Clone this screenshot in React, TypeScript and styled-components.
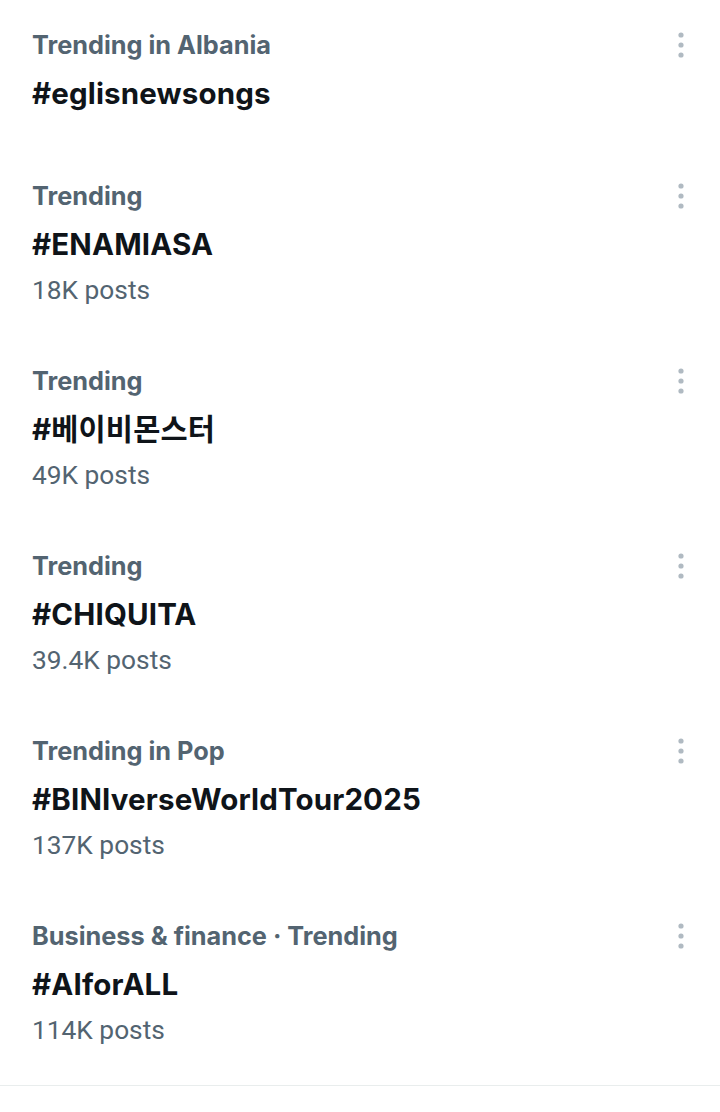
import React from 'react';
import styled, { createGlobalStyle } from 'styled-components';

type Trend = {
  category: string;
  tag: string;
  posts?: string;
};

const trends: Trend[] = [
  { category: 'Trending in Albania', tag: '#eglisnewsongs' },
  { category: 'Trending', tag: '#ENAMIASA', posts: '18K posts' },
  { category: 'Trending', tag: '#베이비몬스터', posts: '49K posts' },
  { category: 'Trending', tag: '#CHIQUITA', posts: '39.4K posts' },
  { category: 'Trending in Pop', tag: '#BINIverseWorldTour2025', posts: '137K posts' },
  { category: 'Business & finance · Trending', tag: '#AIforALL', posts: '114K posts' },
];

const GlobalStyle = createGlobalStyle`
  html, body {
    margin: 0;
    padding: 0;
    background: #ffffff;
  }
  body {
    font-family: Roboto, "Noto Sans CJK KR", sans-serif;
    -webkit-font-smoothing: antialiased;
  }
`;

const List = styled.div`
  display: flex;
  flex-direction: column;
  width: 720px;
  border-bottom: 1px solid #e9eded;
  padding-bottom: 9px;
`;

const Item = styled.div`
  display: flex;
  align-items: flex-start;
  justify-content: space-between;
  padding: 26px 24px 29px 32px;
`;

const Texts = styled.div`
  display: flex;
  flex-direction: column;
`;

const Category = styled.div`
  font-family: Inter, "Noto Sans CJK KR", sans-serif;
  font-size: 25.3px;
  font-weight: 700;
  line-height: 38px;
  color: #536471;
`;

const Tag = styled.div`
  font-family: Inter, "Noto Sans CJK KR", sans-serif;
  font-size: 29.5px;
  font-weight: 700;
  letter-spacing: 0.15px;
  line-height: 58px;
  color: #0f1419;
`;

const Posts = styled.div`
  font-size: 26.3px;
  font-weight: 400;
  line-height: 34px;
  color: #536471;
`;

const MoreButton = styled.button`
  display: flex;
  align-items: center;
  justify-content: center;
  width: 30px;
  height: 38px;
  padding: 0;
  border: none;
  background: none;
  cursor: pointer;
`;

const MoreIcon = () => (
  <svg width="6" height="26" viewBox="0 0 6 26">
    <circle cx="3" cy="3" r="2.6" fill="#b0bac2" />
    <circle cx="3" cy="13" r="2.6" fill="#b0bac2" />
    <circle cx="3" cy="23" r="2.6" fill="#b0bac2" />
  </svg>
);

export default function App() {
  return (
    <>
      <GlobalStyle />
      <List>
        {trends.map((t) => (
          <Item key={t.tag}>
            <Texts>
              <Category>{t.category}</Category>
              <Tag>{t.tag}</Tag>
              {t.posts && <Posts>{t.posts}</Posts>}
            </Texts>
            <MoreButton aria-label="More">
              <MoreIcon />
            </MoreButton>
          </Item>
        ))}
      </List>
    </>
  );
}
